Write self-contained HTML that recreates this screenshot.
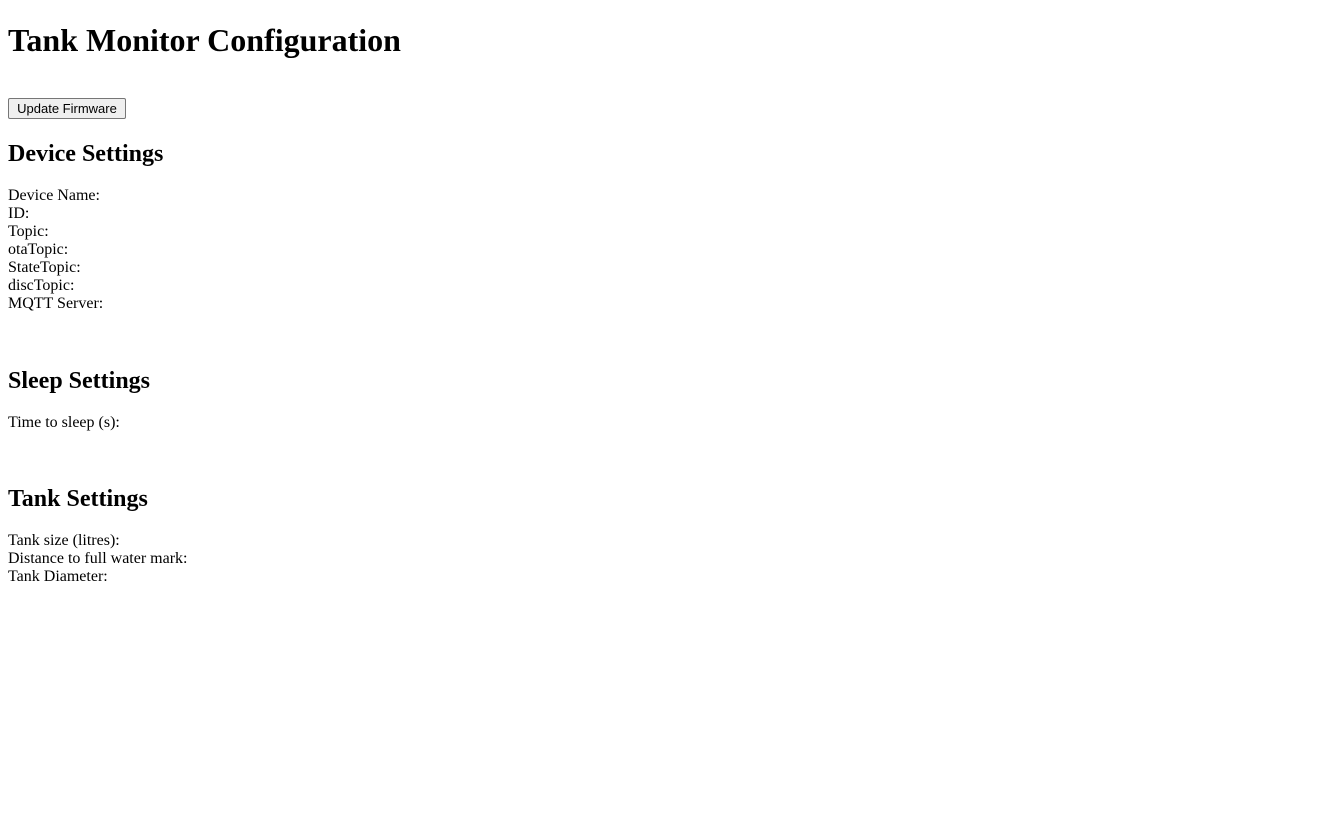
<!DOCTYPE html>
<html><head><meta charset="utf-8"><style>
html,body{margin:0;padding:0;background:#fff;width:1334px;height:830px;overflow:hidden;}
body{font-family:"Liberation Serif",serif;color:#000;position:relative;}
.a{position:absolute;left:8px;white-space:nowrap;}
h1{font-size:32px;font-weight:bold;margin:0;line-height:37px;}
h2{font-size:24px;font-weight:bold;margin:0;line-height:28px;}
.t{font-size:16px;line-height:18px;}
button{position:absolute;left:8px;top:98px;width:118px;height:21px;font-family:"Liberation Sans",sans-serif;font-size:13px;background:#efefef;border:1px solid #767676;border-radius:2px;padding:0;color:#000;}
</style></head><body>
<h1 class="a" style="top:22px">Tank Monitor Configuration</h1>
<button>Update Firmware</button>
<h2 class="a" style="top:140px">Device Settings</h2>
<div class="a t" style="top:187px">Device Name:<br>ID:<br>Topic:<br>otaTopic:<br>StateTopic:<br>discTopic:<br>MQTT Server:</div>
<h2 class="a" style="top:367px">Sleep Settings</h2>
<div class="a t" style="top:414px">Time to sleep (s):</div>
<h2 class="a" style="top:485px">Tank Settings</h2>
<div class="a t" style="top:532px">Tank size (litres):<br>Distance to full water mark:<br>Tank Diameter:</div>
</body></html>
